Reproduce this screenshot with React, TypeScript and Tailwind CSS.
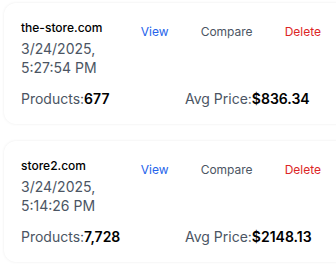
import React from "react";

interface Crawl {
  domain: string;
  date: string;
  products: string;
  avgPrice: string;
}

const crawls: Crawl[] = [
  { domain: "the-store.com", date: "3/24/2025, 5:27:54 PM", products: "677", avgPrice: "$836.34" },
  { domain: "store2.com", date: "3/24/2025, 5:14:26 PM", products: "7,728", avgPrice: "$2148.13" },
];

function CrawlCard({ crawl }: { crawl: Crawl }) {
  return (
    <div className="w-[350px] shrink-0 rounded-xl bg-white px-[17px] pt-[17px] pb-[15px] shadow-[0_0_3px_rgba(0,0,0,0.08)]">
      <div className="flex items-start">
        <div className="flex-1 min-w-0">
          <div className="text-[12px] font-medium text-black leading-4">{crawl.domain}</div>
          <div className="mt-[3px] text-[14px] text-[#4b5563] leading-[19px]">{crawl.date}</div>
        </div>
        <div className="flex shrink-0 pt-1 text-[12px] leading-4">
          <button className="px-4 text-[#2563eb]">View</button>
          <button className="px-4 text-[#4b5563]">Compare</button>
          <button className="px-4 text-[#dc2626]">Delete</button>
        </div>
      </div>
      <div className="mt-3 grid grid-cols-2 gap-x-3 text-[14px] leading-5">
        <div className="text-[#4b5563]">
          Products:<span className="font-semibold text-black">{crawl.products}</span>
        </div>
        <div className="text-[#4b5563]">
          Avg Price:<span className="font-semibold text-black">{crawl.avgPrice}</span>
        </div>
      </div>
    </div>
  );
}

export default function App() {
  return (
    <div className="min-h-screen bg-white pl-1 pt-[3px] font-['Inter',sans-serif] overflow-hidden">
      <div className="flex flex-col gap-[17px]">
        {crawls.map((c) => (
          <CrawlCard key={c.domain} crawl={c} />
        ))}
      </div>
    </div>
  );
}
